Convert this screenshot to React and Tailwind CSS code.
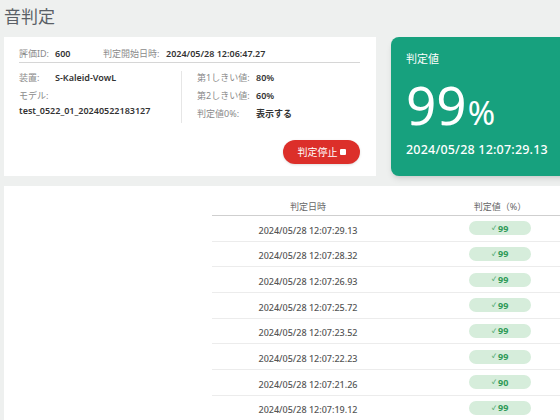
const font = { fontFamily: '"Noto Sans", "Noto Sans CJK JP", sans-serif' };

const rows = [
  ["2024/05/28 12:07:29.13", 99],
  ["2024/05/28 12:07:28.32", 99],
  ["2024/05/28 12:07:26.93", 99],
  ["2024/05/28 12:07:25.72", 99],
  ["2024/05/28 12:07:23.52", 99],
  ["2024/05/28 12:07:22.23", 99],
  ["2024/05/28 12:07:21.26", 90],
  ["2024/05/28 12:07:19.12", 99],
];

function InfoCard() {
  return (
    <div className="w-[372px] h-[139px] bg-white shrink-0 px-[15px] pt-[10px] flex flex-col text-[9px]">
      {/* header line */}
      <div className="flex items-center h-[16px] border-b border-[#d6d6d6] pb-[2px] mr-[1px]">
        <span className="text-[#8a8a8a] w-[36px]">評価ID:</span>
        <span className="font-semibold text-[#333] w-[48px]">600</span>
        <span className="text-[#8a8a8a] w-[63px]">判定開始日時:</span>
        <span className="font-semibold text-[#333]">2024/05/28 12:06:47.27</span>
      </div>

      <div className="flex mt-[8px] h-[52px]">
        <div className="w-[163px] border-r border-[#e6e6e6] flex flex-col gap-[4px]">
          <div className="flex items-center h-[14px]">
            <span className="text-[#8a8a8a] w-[36px]">装置:</span>
            <span className="font-semibold text-[#333]">S-Kaleid-VowL</span>
          </div>
          <div className="text-[#8a8a8a] h-[14px] leading-[14px]">モデル:</div>
          <div className="font-semibold text-[#333] h-[10px] leading-[10px] -mt-[1px]">test_0522_01_20240522183127</div>
        </div>
        <div className="pl-[15px] flex flex-col gap-[4px]">
          <div className="flex items-center h-[14px]">
            <span className="text-[#8a8a8a] w-[59px]">第1しきい値:</span>
            <span className="font-semibold text-[#333]">80%</span>
          </div>
          <div className="flex items-center h-[14px]">
            <span className="text-[#8a8a8a] w-[59px]">第2しきい値:</span>
            <span className="font-semibold text-[#333]">60%</span>
          </div>
          <div className="flex items-center h-[14px]">
            <span className="text-[#8a8a8a] w-[59px]">判定値0%:</span>
            <span className="font-semibold text-[#333]">表示する</span>
          </div>
        </div>
      </div>

      <div className="flex justify-end mt-[17px] pr-[1px]">
        <button className="w-[77px] h-[24px] rounded-full bg-[#dc2f2a] text-white text-[10px] flex items-center justify-center gap-[2px] shadow-sm">
          判定停止
          <span className="inline-block w-[6px] h-[6px] bg-white rounded-[1px]"></span>
        </button>
      </div>
    </div>
  );
}

function ValueCard() {
  return (
    <div className="w-[190px] h-[139px] shrink-0 rounded-lg bg-[#17a17e] text-white pl-[15px] pt-[14px] shadow-md">
      <div className="text-[11px] leading-[16px]">判定値</div>
      <div className="flex items-baseline mt-[15px] h-[46px]">
        <span className="text-[53px] leading-[46px]">99</span>
        <span className="text-[33px] leading-[30px] ml-[1px]">%</span>
      </div>
      <div className="text-[12.5px] font-medium mt-[13px] tracking-[0.2px]">2024/05/28 12:07:29.13</div>
    </div>
  );
}

function ResultTable() {
  return (
    <div className="bg-white mt-[10px] h-[240px] flex">
      <div className="w-[208px] shrink-0" />
      <div className="flex-1">
        <div className="grid grid-cols-[192px_192px_192px] h-[30px] items-end pb-[2px] border-b border-[#cfcfcf] text-[9px] text-[#666]">
          <div className="text-center">判定日時</div>
          <div className="text-center">判定値（%）</div>
          <div />
        </div>
        {rows.map(([t, v], i) => (
          <div
            key={i}
            className="grid grid-cols-[192px_192px_192px] h-[25.7px] items-center border-b border-[#ececec] text-[9px]"
          >
            <div className="text-center text-[#555] font-medium pt-[4px]">{t}</div>
            <div className="flex justify-center">
              <span className="w-[62px] h-[14px] rounded-full bg-[#d6eddb] text-[#2f9b58] font-bold flex items-center justify-center gap-[2px]">
                <span className="text-[6px] text-[#5aae7a]">✓</span>
                {v}
              </span>
            </div>
            <div />
          </div>
        ))}
      </div>
    </div>
  );
}

export default function App() {
  return (
    <div style={font} className="w-[560px] h-[420px] overflow-hidden bg-[#eef0ef] pl-[4px]">
      <div className="h-[37px] pt-[5px] text-[17px] text-[#5a5f66] leading-[24px]">音判定</div>
      <div className="flex gap-[15px]">
        <InfoCard />
        <ValueCard />
      </div>
      <ResultTable />
    </div>
  );
}
